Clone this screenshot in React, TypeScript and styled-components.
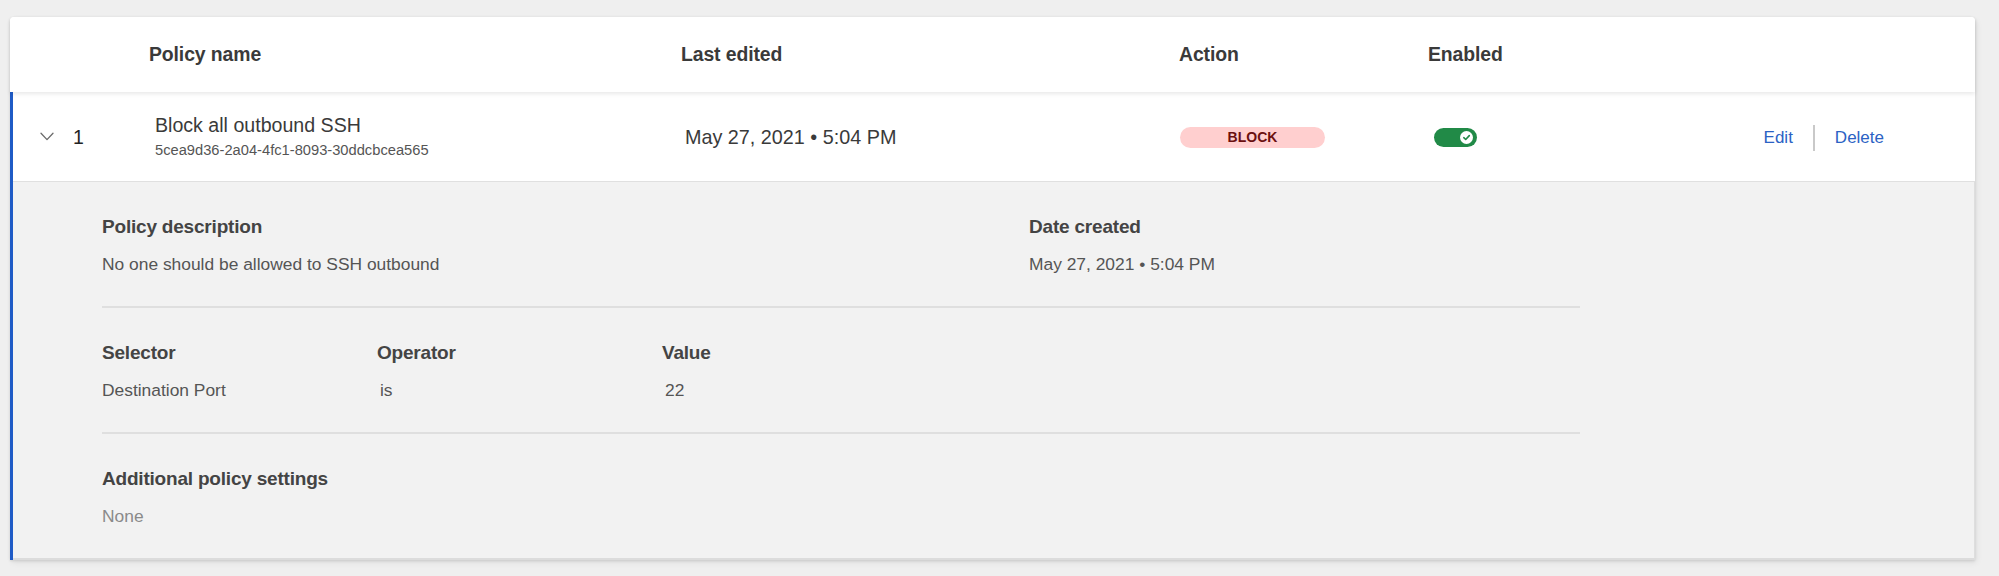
import React from "react";
import styled, { createGlobalStyle } from "styled-components";

const GlobalStyle = createGlobalStyle`
  html, body {
    margin: 0;
    padding: 0;
    background: #efefef;
  }
  body {
    font-family: "Liberation Sans", Arial, Helvetica, sans-serif;
    color: #333;
  }
  * { box-sizing: border-box; }
`;

const Page = styled.div`
  padding: 17px 24px 19px 10px;
`;

const Card = styled.div`
  background: #fff;
  border-radius: 4px 4px 0 0;
  box-shadow: 0 1px 3px rgba(0, 0, 0, 0.12), 2px 3px 6px rgba(0, 0, 0, 0.06);
`;

const HeaderRow = styled.div`
  position: relative;
  z-index: 1;
  display: grid;
  grid-template-columns: 532px 498px 249px 1fr;
  align-items: center;
  height: 75px;
  padding-left: 139px;
  background: #fff;
  border-radius: 4px 4px 0 0;
  box-shadow: 0 2px 4px rgba(0, 0, 0, 0.09);
`;

const HeaderCell = styled.div`
  font-size: 19.4px;
  font-weight: 700;
  color: #3a3a3a;
  letter-spacing: -0.1px;
`;

const Expanded = styled.div`
  border-left: 3px solid #1f5bc6;
`;

const PolicyRow = styled.div`
  display: grid;
  grid-template-columns: 33px 82px 530px 495px 254px 1fr auto;
  align-items: center;
  height: 90px;
  padding: 0 91px 0 27px;
  background: #fff;
  border-bottom: 1px solid #e0e0e0;
`;

const Cell = styled.div`
  display: flex;
  align-items: center;
`;

const ChevronButton = styled.span`
  display: flex;
  align-items: center;
  height: 14px;
  color: #6b6b6b;
`;

const RowIndex = styled.span`
  font-size: 19.5px;
  color: #222;
  padding-top: 2px;
`;

const NameCell = styled.div`
  display: flex;
  flex-direction: column;
  gap: 3px;
`;

const PolicyTitle = styled.span`
  font-size: 19.6px;
  line-height: 24px;
  color: #3a3a3a;
`;

const PolicyId = styled.span`
  font-size: 14.7px;
  line-height: 20px;
  color: #555;
`;

const RowText = styled.span`
  font-size: 19.8px;
  color: #3a3a3a;
  padding-top: 2px;
`;

const ActionPill = styled.span`
  display: inline-flex;
  align-items: center;
  justify-content: center;
  width: 145px;
  height: 21px;
  border-radius: 11px;
  background: #ffcfcf;
  color: #6b1010;
  font-size: 14px;
  font-weight: 700;
  margin-top: 1px;
`;

const Toggle = styled.span<{ $on: boolean }>`
  position: relative;
  display: inline-block;
  width: 43px;
  height: 19px;
  border-radius: 10px;
  margin-top: 1px;
  background: ${(p) => (p.$on ? "#218a47" : "#b5b5b5")};
`;

const Knob = styled.span<{ $on: boolean }>`
  position: absolute;
  top: 3px;
  ${(p) => (p.$on ? "right: 4px;" : "left: 4px;")}
  width: 13px;
  height: 13px;
  border-radius: 50%;
  background: #fff;
  display: flex;
  align-items: center;
  justify-content: center;
`;

const RowActions = styled.div`
  display: flex;
  align-items: center;
  gap: 20px;
  padding-top: 3px;
`;

const LinkButton = styled.button`
  border: 0;
  background: none;
  padding: 0;
  font-family: inherit;
  font-size: 17px;
  color: #2b62c4;
  cursor: pointer;
`;

const ActionDivider = styled.span`
  width: 2px;
  height: 26px;
  background: #c9c9c9;
`;

const DetailPanel = styled.div`
  background: #f2f2f2;
  padding: 0 0 0 89px;
  border-right: 1px solid #dedede;
  border-bottom: 2px solid #dcdcdc;
`;

const DetailInner = styled.div`
  width: 1478px;
`;

const DetailSection = styled.div<{ $cols: string }>`
  display: grid;
  grid-template-columns: ${(p) => p.$cols};
  padding: 33px 0 30px;
`;

const Field = styled.div`
  display: flex;
  flex-direction: column;
  gap: 13px;
`;

const FieldLabel = styled.span`
  font-size: 19px;
  line-height: 24px;
  font-weight: 700;
  color: #444;
  letter-spacing: -0.2px;
`;

const FieldValue = styled.span<{ $muted?: boolean; $indent?: number }>`
  font-size: 17.4px;
  line-height: 24px;
  padding-left: ${(p) => p.$indent ?? 0}px;
  color: ${(p) => (p.$muted ? "#8a8a8a" : "#555")};
`;

const Rule = styled.div`
  height: 2px;
  background: #dfdfdf;
`;

const Chevron = () => (
  <svg width="14" height="9" viewBox="0 0 14 9" fill="none">
    <path d="M1 1.2 L7 7.6 L13 1.2" stroke="currentColor" strokeWidth="1.3" strokeLinecap="round" strokeLinejoin="round" />
  </svg>
);

const Check = () => (
  <svg width="9" height="9" viewBox="0 0 9 9" fill="none">
    <path d="M1.8 4.7 L3.7 6.5 L7.3 2.6" stroke="#218a47" strokeWidth="1.6" strokeLinecap="round" strokeLinejoin="round" />
  </svg>
);

export default function App() {
  return (
    <>
      <GlobalStyle />
      <Page>
        <Card>
          <HeaderRow>
            <HeaderCell>Policy name</HeaderCell>
            <HeaderCell>Last edited</HeaderCell>
            <HeaderCell>Action</HeaderCell>
            <HeaderCell>Enabled</HeaderCell>
          </HeaderRow>
          <Expanded>
            <PolicyRow>
              <ChevronButton>
                <Chevron />
              </ChevronButton>
              <RowIndex>1</RowIndex>
              <NameCell>
                <PolicyTitle>Block all outbound SSH</PolicyTitle>
                <PolicyId>5cea9d36-2a04-4fc1-8093-30ddcbcea565</PolicyId>
              </NameCell>
              <RowText>May 27, 2021 • 5:04 PM</RowText>
              <Cell>
                <ActionPill>BLOCK</ActionPill>
              </Cell>
              <Cell>
                <Toggle $on>
                  <Knob $on>
                    <Check />
                  </Knob>
                </Toggle>
              </Cell>
              <RowActions>
                <LinkButton>Edit</LinkButton>
                <ActionDivider />
                <LinkButton>Delete</LinkButton>
              </RowActions>
            </PolicyRow>
            <DetailPanel>
              <DetailInner>
                <DetailSection $cols="927px 1fr">
                  <Field>
                    <FieldLabel>Policy description</FieldLabel>
                    <FieldValue>No one should be allowed to SSH outbound</FieldValue>
                  </Field>
                  <Field>
                    <FieldLabel>Date created</FieldLabel>
                    <FieldValue>May 27, 2021 • 5:04 PM</FieldValue>
                  </Field>
                </DetailSection>
                <Rule />
                <DetailSection $cols="275px 285px 1fr">
                  <Field>
                    <FieldLabel>Selector</FieldLabel>
                    <FieldValue>Destination Port</FieldValue>
                  </Field>
                  <Field>
                    <FieldLabel>Operator</FieldLabel>
                    <FieldValue $indent={3}>is</FieldValue>
                  </Field>
                  <Field>
                    <FieldLabel>Value</FieldLabel>
                    <FieldValue $indent={3}>22</FieldValue>
                  </Field>
                </DetailSection>
                <Rule />
                <DetailSection $cols="1fr">
                  <Field>
                    <FieldLabel>Additional policy settings</FieldLabel>
                    <FieldValue $muted>None</FieldValue>
                  </Field>
                </DetailSection>
              </DetailInner>
            </DetailPanel>
          </Expanded>
        </Card>
      </Page>
    </>
  );
}
